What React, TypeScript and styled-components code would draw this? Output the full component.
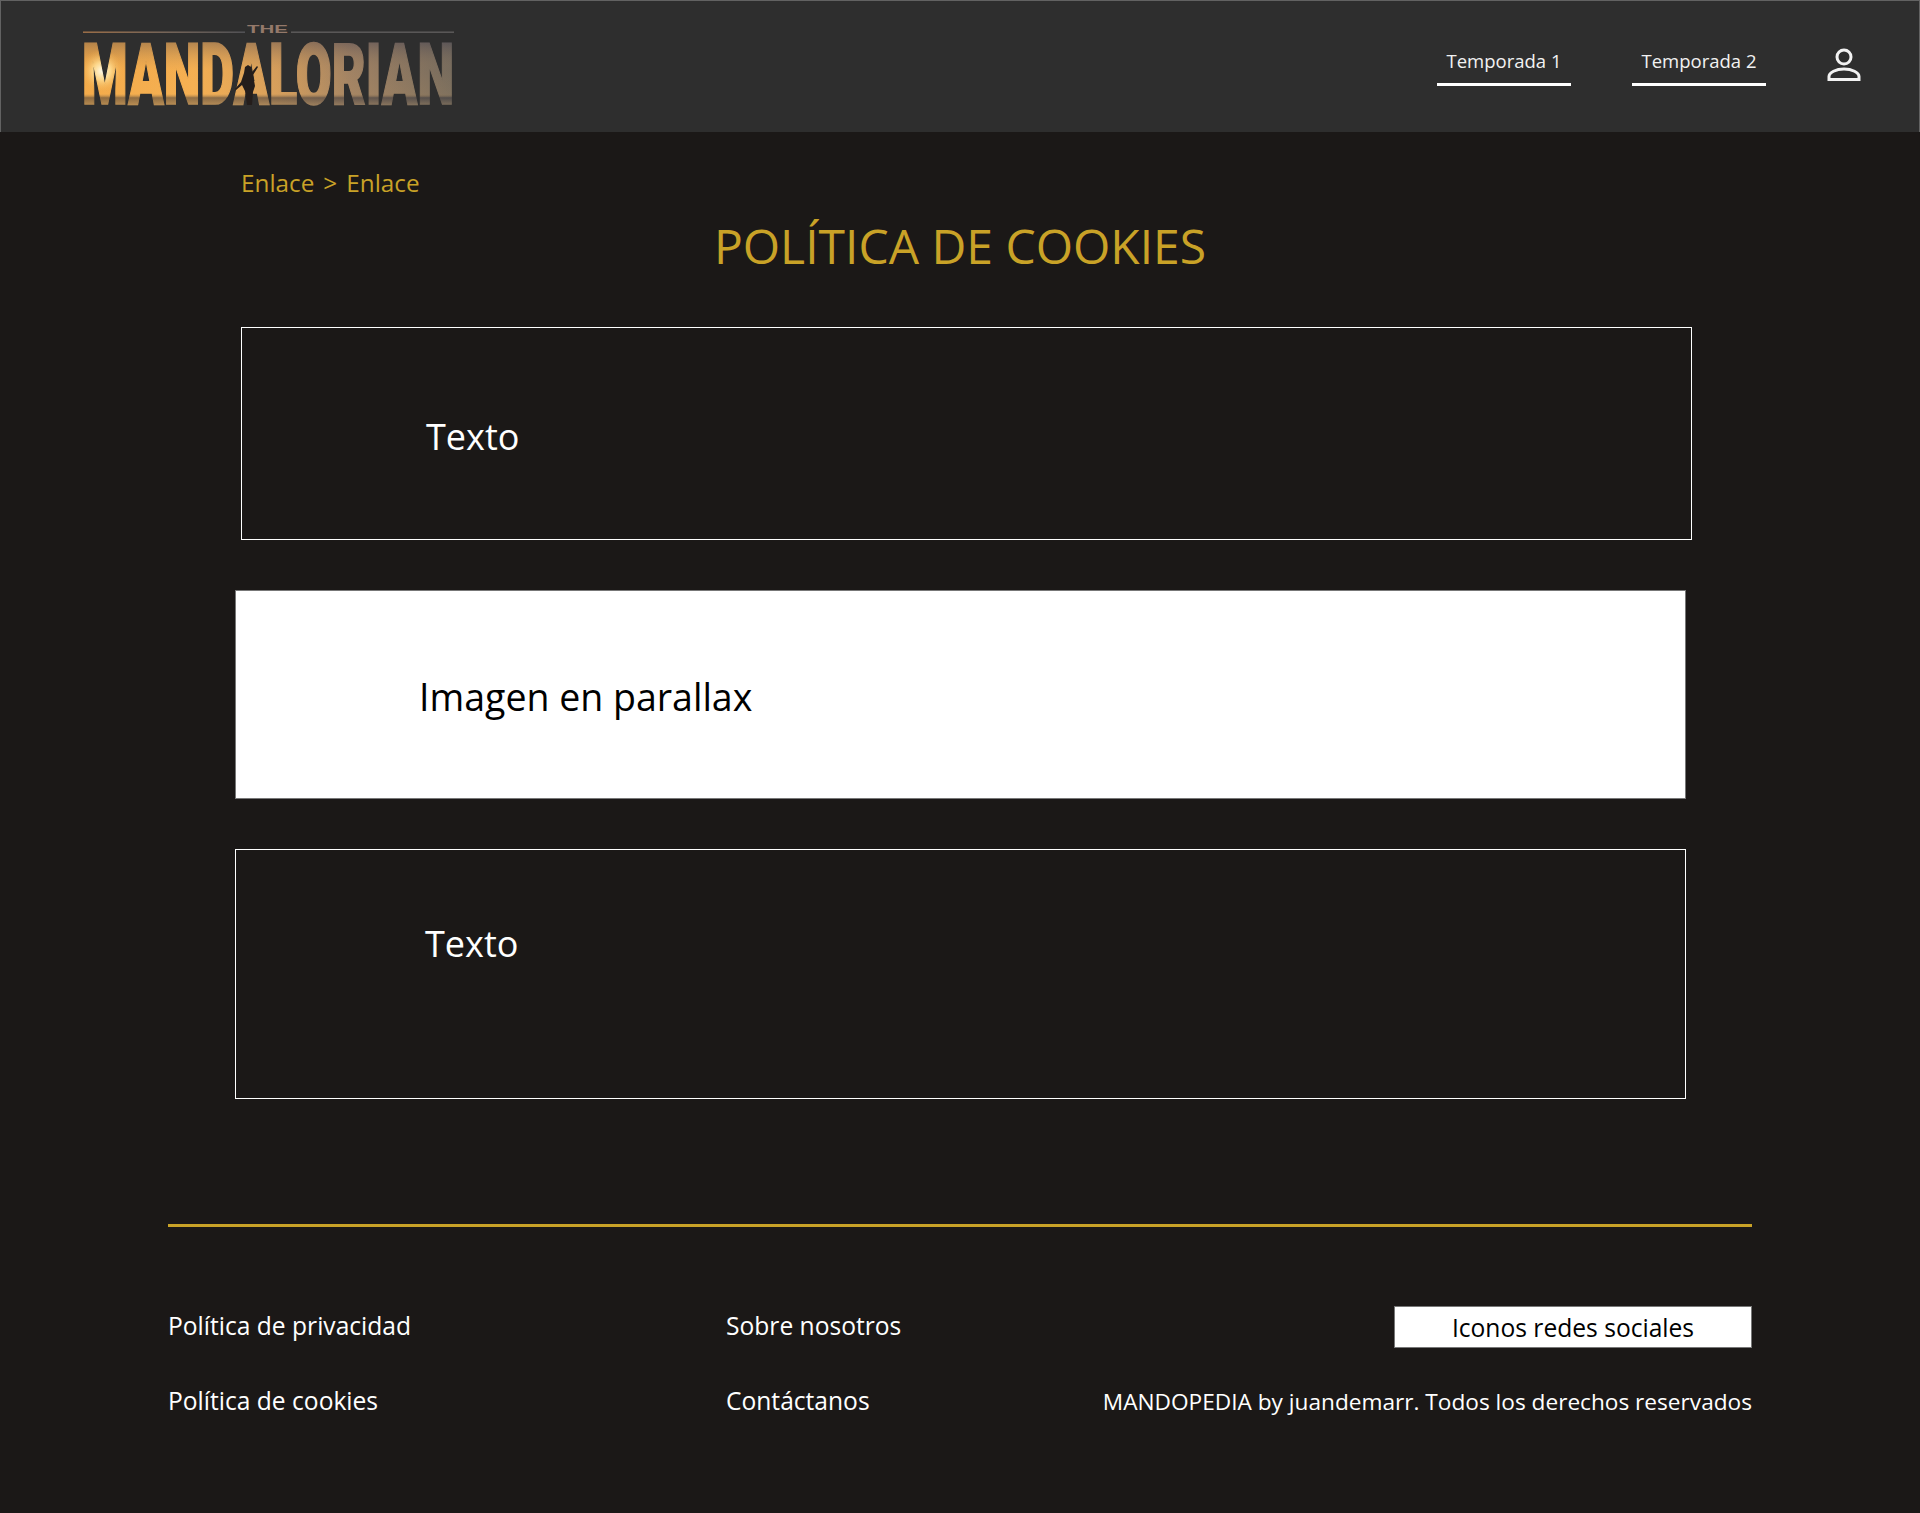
import React from 'react';
import styled, { createGlobalStyle } from 'styled-components';

const Gold = '#c9a227';
const Night = '#1b1817';
const Font = '"Open Sans", "Noto Sans", "Liberation Sans", sans-serif';

const GlobalStyle = createGlobalStyle`
  html, body {
    margin: 0;
    padding: 0;
    background: ${Night};
  }
  body {
    font-family: ${Font};
    color: #fff;
  }
`;

const Page = styled.div`
  min-height: 1513px;
  background: ${Night};
`;

const Header = styled.header`
  box-sizing: border-box;
  height: 132px;
  padding: 0 57px 0 81px;
  display: flex;
  justify-content: space-between;
  align-items: flex-start;
  background: #2e2e2e;
  border: 1px solid #626262;
  border-bottom: 0;
`;

const LogoLink = styled.a`
  display: block;
  margin-top: 20px;
`;

const Nav = styled.nav`
  display: flex;
  align-items: flex-start;
  margin-top: 42px;
`;

const NavLink = styled.a`
  box-sizing: border-box;
  width: 134px;
  height: 43px;
  margin-right: 61px;
  border-bottom: 3px solid #fff;
  font-size: 18.5px;
  line-height: 36px;
  text-align: center;
  color: #f2f2f2;
`;

const UserButton = styled.a`
  display: block;
  margin: 4px 0 0 -1px;
`;

const Main = styled.main`
  padding: 35px 0 0 235px;
`;

const Breadcrumb = styled.div`
  display: flex;
  gap: 9px;
  margin-left: 6px;
  font-size: 24.3px;
  line-height: 32px;
  color: ${Gold};
`;

const Title = styled.h1`
  margin: 15px 0 49px;
  padding-right: 235px;
  font-size: 48px;
  font-weight: 400;
  line-height: 64px;
  text-align: center;
  color: ${Gold};
`;

const Block = styled.section<{ $offset?: number; $height: number; $top: number; $left: number; $after: number; $inverted?: boolean }>`
  box-sizing: border-box;
  width: 1451px;
  height: ${p => p.$height}px;
  margin: 0 0 ${p => p.$after}px ${p => p.$offset || 0}px;
  padding: ${p => p.$top}px 0 0 ${p => p.$left}px;
  font-size: ${p => (p.$inverted ? 37.5 : 36)}px;
  line-height: 52px;
  color: ${p => (p.$inverted ? '#000' : '#fff')};
  background: ${p => (p.$inverted ? '#fff' : 'transparent')};
  border: 1px solid ${p => (p.$inverted ? '#777' : '#fff')};
`;

const Footer = styled.footer`
  width: 1584px;
  margin: 125px 0 0 168px;
  border-top: 3px solid ${Gold};
`;

const FooterGrid = styled.div`
  display: grid;
  grid-template-columns: 558px 1fr auto;
  grid-template-rows: 42px 41px;
  row-gap: 33px;
  align-items: center;
  padding-top: 79px;
  font-size: 24.6px;
`;

const FooterLink = styled.a`
  margin-bottom: 3px;
  color: #fff;
`;

const Social = styled.div`
  box-sizing: border-box;
  justify-self: end;
  width: 358px;
  height: 42px;
  line-height: 41px;
  text-align: center;
  color: #000;
  background: #fff;
  border: 1px solid #777;
`;

const Copyright = styled.div`
  text-align: right;
  font-size: 22.65px;
`;

const Logo = () => (
  <svg width="372" height="86" viewBox="0 0 372 86" aria-label="The Mandalorian">
    <defs>
      <linearGradient id="sky" x1="0" x2="1" y1="0" y2="0">
        <stop offset="0" stopColor="#f0a340" />
        <stop offset="0.3" stopColor="#f2aa4c" />
        <stop offset="0.52" stopColor="#cb9457" />
        <stop offset="0.72" stopColor="#8a7262" />
        <stop offset="1" stopColor="#54555a" />
      </linearGradient>
      <linearGradient id="haze" x1="0" x2="0" y1="0" y2="1">
        <stop offset="0" stopColor="#5a5052" stopOpacity="0.45" />
        <stop offset="0.45" stopColor="#ffc46a" stopOpacity="0.2" />
        <stop offset="0.8" stopColor="#ffc46a" stopOpacity="0.25" />
        <stop offset="0.86" stopColor="#4e4640" stopOpacity="0.6" />
        <stop offset="1" stopColor="#a58a63" stopOpacity="0.6" />
      </linearGradient>
      <radialGradient id="sun" cx="0.5" cy="0.5" r="0.5">
        <stop offset="0" stopColor="#fffbe8" />
        <stop offset="0.4" stopColor="#ffdf95" stopOpacity="0.85" />
        <stop offset="1" stopColor="#f0a945" stopOpacity="0" />
      </radialGradient>
      <linearGradient id="rule" x1="0" x2="1" y1="0" y2="0">
        <stop offset="0" stopColor="#a5744a" />
        <stop offset="0.5" stopColor="#7d6a5c" />
        <stop offset="1" stopColor="#555559" />
      </linearGradient>
      <mask id="letters">
        <text
          x="0"
          y="83"
          textLength="372"
          lengthAdjust="spacingAndGlyphs"
          fontFamily='Roboto, "Liberation Sans", sans-serif'
          fontWeight="900"
          fontSize="85"
          fill="#fff"
          stroke="#fff"
          strokeWidth="1.6"
        >
          MANDALORIAN
        </text>
      </mask>
    </defs>
    <rect x="1" y="10.5" width="162" height="1.4" fill="url(#rule)" />
    <rect x="209" y="10.5" width="163" height="1.4" fill="#5f5d5d" />
    <text x="165" y="12" textLength="41" lengthAdjust="spacingAndGlyphs" fontFamily='"Liberation Sans", sans-serif' fontWeight="700" fontSize="11" fill="#94796a">
      THE
    </text>
    <g mask="url(#letters)">
      <rect x="0" y="20" width="372" height="66" fill="url(#sky)" />
      <rect x="0" y="20" width="372" height="66" fill="url(#haze)" />
      <circle cx="20" cy="50" r="22" fill="url(#sun)" />
    </g>
    <path d="M165 84l-2-14-3-6-6 5-1-1 6-7 3-9 1-6 3-2 3 2 1 5 5-6 1 1-5 8 2 11-2 6-1 13z" fill="#241d1b" />
  </svg>
);

const UserIcon = () => (
  <svg width="36" height="36" viewBox="0 0 36 36" fill="none" stroke="#f2f2f2" strokeWidth="3">
    <circle cx="18" cy="10" r="7" />
    <path d="M3 32.5v-3c0-4 7-7.500 15-7.500s15 3.500 15 7.500v3z" />
  </svg>
);

export default function App() {
  return (
    <Page>
      <GlobalStyle />
      <Header>
        <LogoLink>
          <Logo />
        </LogoLink>
        <Nav>
          <NavLink>Temporada 1</NavLink>
          <NavLink>Temporada 2</NavLink>
          <UserButton>
            <UserIcon />
          </UserButton>
        </Nav>
      </Header>
      <Main>
        <Breadcrumb>
          <span>Enlace</span>
          <span>&gt;</span>
          <span>Enlace</span>
        </Breadcrumb>
        <Title>POLÍTICA DE COOKIES</Title>
        <Block $offset={6} $height={213} $top={83} $left={184} $after={50}>
          Texto
        </Block>
        <Block $height={209} $top={80} $left={183} $after={50} $inverted>
          Imagen en parallax
        </Block>
        <Block $height={250} $top={68} $left={189} $after={0}>
          Texto
        </Block>
      </Main>
      <Footer>
        <FooterGrid>
          <FooterLink>Política de privacidad</FooterLink>
          <FooterLink>Sobre nosotros</FooterLink>
          <Social>Iconos redes sociales</Social>
          <FooterLink>Política de cookies</FooterLink>
          <FooterLink>Contáctanos</FooterLink>
          <Copyright>MANDOPEDIA by juandemarr. Todos los derechos reservados</Copyright>
        </FooterGrid>
      </Footer>
    </Page>
  );
}
